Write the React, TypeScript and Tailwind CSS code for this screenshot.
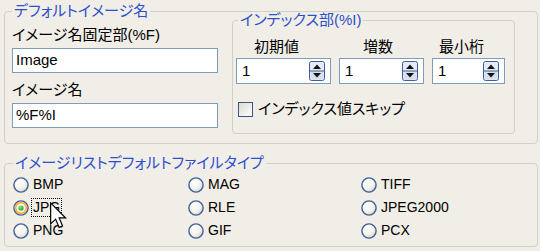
import React from "react";

// group-box title colour and frame colour (XP style)
const legendCls =
  "px-[2px] text-[15px] leading-[16px] text-[#2d4fcf] [font-feature-settings:'palt']";

const Radio = ({ checked }: { checked?: boolean }) => (
  <svg width="16" height="16" viewBox="0 0 16 16" className="shrink-0">
    <defs>
      <radialGradient id="rfill" cx="0.35" cy="0.3" r="0.8">
        <stop offset="0" stopColor="#ffffff" />
        <stop offset="0.6" stopColor="#f3f1ea" />
        <stop offset="1" stopColor="#cfccc0" />
      </radialGradient>
      <radialGradient id="rdot" cx="0.4" cy="0.35" r="0.7">
        <stop offset="0" stopColor="#8fe08a" />
        <stop offset="1" stopColor="#229a22" />
      </radialGradient>
    </defs>
    <circle cx="8" cy="8" r="7.1" fill="url(#rfill)" stroke="#3f6199" strokeWidth="1.4" />
    {checked && (
      <>
        <circle cx="8" cy="8" r="5.4" fill="none" stroke="#f6b43c" strokeWidth="1.8" />
        <circle cx="8" cy="8" r="2.6" fill="url(#rdot)" />
      </>
    )}
  </svg>
);

const Spinner = () => (
  <svg width="16" height="20" viewBox="0 0 16 20" className="shrink-0">
    <rect x="0.5" y="0.5" width="15" height="19" rx="2" fill="#e4ebf7" stroke="#3f5f93" />
    <rect x="1.5" y="10" width="13" height="8.5" fill="#d8e0ee" />
    <line x1="1" y1="10" x2="15" y2="10" stroke="#3f5f93" />
    <path d="M8 3.5 L12 8 L4 8 Z" fill="#111" />
    <path d="M4 12 L12 12 L8 16.5 Z" fill="#111" />
  </svg>
);

const SpinInput = ({ width }: { width: string }) => (
  <div
    className={`${width} h-[26px] flex items-center justify-between border border-[#7f9db9] bg-white pl-[5px] pr-[5px]`}
  >
    <span className="text-[15px] leading-[18px] text-black">1</span>
    <Spinner />
  </div>
);

const RadioItem = ({
  label,
  checked,
  focused,
}: {
  label: string;
  checked?: boolean;
  focused?: boolean;
}) => (
  <div className="h-[23px] flex items-center gap-[3px]">
    <Radio checked={checked} />
    <span
      className={`text-[14px] leading-[17px] text-black px-[1px] ${
        focused ? "outline outline-1 outline-dotted outline-black" : ""
      }`}
    >
      {label}
    </span>
  </div>
);

const App = () => {
  return (
    <div className="relative w-[540px] h-[251px] overflow-hidden bg-[#f0eee6] pl-[4px] pr-[2px] pt-[3px] font-['Liberation_Sans','Noto_Sans_CJK_JP',sans-serif] text-black">
      {/* デフォルトイメージ名 */}
      <fieldset className="w-[534px] border border-[#d3d1c4] rounded-[4px] pl-[7px] pr-[22px] pb-[9px]">
        <legend className={legendCls}>デフォルトイメージ名</legend>
        <div className="flex items-start gap-[14px]">
          <div className="w-[206px] flex flex-col pt-[7px]">
            <div className="text-[15px] leading-[18px] [font-feature-settings:'palt']">
              イメージ名固定部(%F)
            </div>
            <div className="mt-[4px] h-[25px] border border-[#7f9db9] bg-white pl-[3px] flex items-center text-[15px]">
              Image
            </div>
            <div className="mt-[8px] text-[15px] leading-[18px] [font-feature-settings:'palt']">
              イメージ名
            </div>
            <div className="mt-[4px] h-[25px] border border-[#7f9db9] bg-white pl-[3px] flex items-center text-[15px]">
              %F%I
            </div>
          </div>

          {/* インデックス部(%I) */}
          <fieldset className="-mt-[7px] w-[283px] border border-[#d3d1c4] rounded-[4px] pl-[3px] pr-[9px] pb-[15px]">
            <legend className={`${legendCls} ml-[2px]`}>インデックス部(%I)</legend>
            <div className="flex gap-[8px] mt-[10px]">
              <div className="flex flex-col gap-[2px]">
                <div className="pl-[18px] text-[15px] leading-[18px]">初期値</div>
                <SpinInput width="w-[95px]" />
              </div>
              <div className="flex flex-col gap-[2px]">
                <div className="pl-[24px] text-[15px] leading-[18px]">増数</div>
                <SpinInput width="w-[85px]" />
              </div>
              <div className="flex flex-col gap-[2px]">
                <div className="pl-[7px] text-[15px] leading-[18px]">最小桁</div>
                <SpinInput width="w-[73px]" />
              </div>
            </div>
            <div className="mt-[16px] h-[18px] flex items-center gap-[5px] pl-[2px]">
              <div className="w-[15px] h-[15px] border border-[#3b5683] bg-gradient-to-br from-[#dcdad0] to-white" />
              <span className="text-[15px] leading-[18px] [font-feature-settings:'palt']">
                インデックス値スキップ
              </span>
            </div>
          </fieldset>
        </div>
      </fieldset>

      {/* イメージリストデフォルトファイルタイプ */}
      <fieldset className="mt-[11px] w-[534px] border border-[#d3d1c4] rounded-[4px] pl-[8px] pt-[2px] pb-[4px]">
        <legend className={legendCls}>イメージリストデフォルトファイルタイプ</legend>
        <div className="grid grid-cols-[175px_173px_1fr]">
          <div className="flex flex-col">
            <RadioItem label="BMP" />
            <RadioItem label="JPG" checked focused />
            <RadioItem label="PNG" />
          </div>
          <div className="flex flex-col">
            <RadioItem label="MAG" />
            <RadioItem label="RLE" />
            <RadioItem label="GIF" />
          </div>
          <div className="flex flex-col">
            <RadioItem label="TIFF" />
            <RadioItem label="JPEG2000" />
            <RadioItem label="PCX" />
          </div>
        </div>
      </fieldset>

      {/* mouse pointer */}
      <svg
        width="17"
        height="28"
        viewBox="0 0 13 21"
        className="absolute left-[50px] top-[202px]"
      >
        <path
          d="M0.5 0.5 L0.5 16.5 L4.3 12.9 L7 19.2 L9.6 18.1 L7 12 L12 12 Z"
          fill="#fff"
          stroke="#000"
          strokeWidth="0.9"
          strokeLinejoin="miter"
        />
      </svg>
    </div>
  );
};

export default App;
